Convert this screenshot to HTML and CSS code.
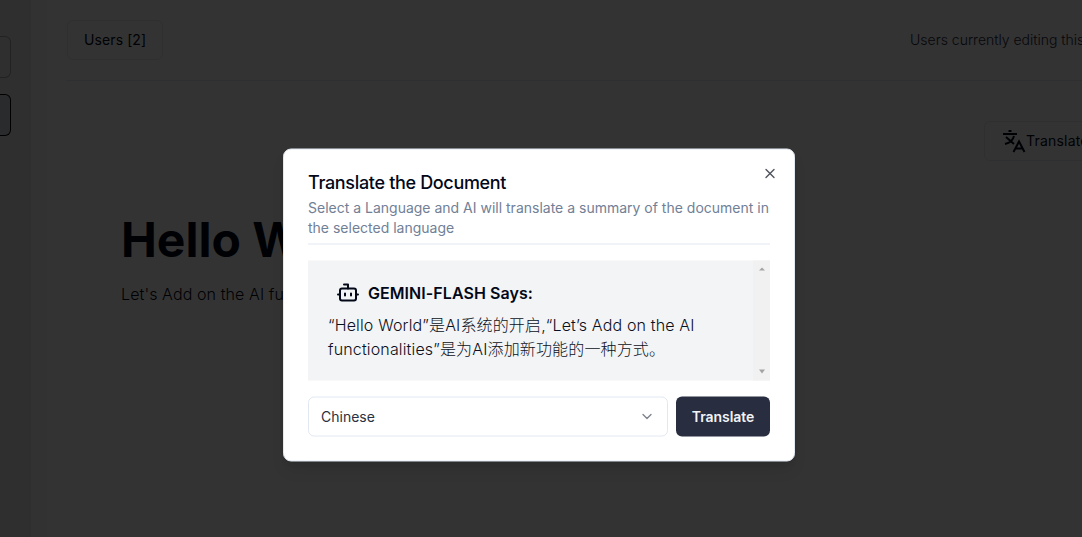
FILE: index.html
```html
<!DOCTYPE html>
<html lang="en">
<head>
<meta charset="utf-8">
<title>Translate the Document</title>
<link rel="stylesheet" href="styles.css">
</head>
<body>
<div class="app">
  <aside class="sidebar">
    <div class="doc-link"></div>
    <div class="doc-link active"></div>
  </aside>
  <div class="content">
    <main class="page">
      <div class="presence">
        <button class="btn users">Users [2]</button>
        <p class="editing">Users currently editing this page</p>
      </div>
      <div class="tools">
        <button class="btn translate">
          <svg width="24" height="24" viewBox="0 0 24 24" fill="none" stroke="currentColor" stroke-width="2"><path d="M1 5h14M6.500 2h3M4 8l8 7M12 7c-1 4-4 7-9 8M11.500 23 17 12.500 22.500 23M13.500 19.500h7"/></svg>
          <span>Translate</span>
        </button>
      </div>
      <article class="document">
        <h1>Hello World</h1>
        <p>Let's Add on the AI functionalities</p>
      </article>
    </main>
  </div>
</div>
<div class="overlay"></div>
<section class="dialog" role="dialog">
  <header class="dialog-head">
    <h2>Translate the Document</h2>
    <p>Select a Language and AI will translate a summary of the document in the selected language</p>
    <hr>
  </header>
  <div class="answer">
    <div class="answer-body">
      <div class="answer-title">
        <svg width="24" height="24" viewBox="0 0 24 24" fill="none" stroke="currentColor" stroke-width="2" stroke-linecap="round" stroke-linejoin="round"><path d="M12 8V4H8"/><rect width="16" height="12" x="4" y="8" rx="2"/><path d="M2 14h2M20 14h2M15 13v2M9 13v2"/></svg>
        <strong>GEMINI-FLASH Says:</strong>
      </div>
      <p>“Hello World”是AI系统的开启,“Let’s Add on the AI functionalities”是为AI添加新功能的一种方式。</p>
    </div>
    <div class="scrollbar"><i class="up"></i><i class="down"></i></div>
  </div>
  <form class="controls">
    <div class="select"><span>Chinese</span>
      <svg width="16" height="16" viewBox="0 0 24 24" fill="none" stroke="currentColor" stroke-width="2" stroke-linecap="round" stroke-linejoin="round"><path d="m6 9 6 6 6-6"/></svg>
    </div>
    <button class="submit" type="button">Translate</button>
  </form>
  <button class="close" aria-label="Close"><svg width="16" height="16" viewBox="0 0 24 24" fill="none" stroke="currentColor" stroke-width="2" stroke-linecap="round"><path d="M18 6 6 18M6 6l12 12"/></svg></button>
</section>
</body>
</html>
```
FILE: styles.css
```css
* { box-sizing: border-box; margin: 0; }
body { height: 537px; overflow: hidden; font-family: Inter, "Noto Sans CJK SC", sans-serif; font-size: 16px; line-height: 24px; color: #020817; background: #fff; }
button { font: inherit; color: inherit; }
svg { display: block; flex: none; }
.app { display: flex; height: 537px; width: 100%; overflow: hidden; }
.sidebar { width: 31px; background: #ebebeb; padding-top: 36px; display: flex; flex-direction: column; gap: 16px; flex: none; }
.doc-link { width: 11px; height: 42px; border: 1px solid #aaa; border-left: 0; border-radius: 0 6px 6px 0; }
.doc-link.active { border-color: #000; background: #d1d5db; }
.content { flex: 1; min-width: 0; background: #fafafa; padding-left: 16px; display: flex; }
.page { flex: 1; min-width: 0; background: #fff; padding: 20px 0 0 20px; }
.presence { height: 61px; display: flex; justify-content: space-between; align-items: flex-start; border-bottom: 1px solid #e2e8f0; }
.btn { height: 40px; border: 1px solid #e2e8f0; border-radius: 6px; background: #fff; padding: 0 16px; font-size: 14px; display: flex; align-items: center; }
.users { width: 96px; letter-spacing: .1px; white-space: nowrap; }
.editing { width: 172px; line-height: 40px; font-size: 14px; font-weight: 300; color: #1e293b; white-space: nowrap; overflow: hidden; }
.tools { padding: 40px 0 0 917px; overflow: hidden; }
.translate { width: 121px; padding-left: 17px; letter-spacing: .2px; }
.document { padding: 55px 0 0 54px; width: 700px; }
.document h1 { font-size: 48px; line-height: 48px; font-weight: 700; }
.document p { margin-top: 18px; font-weight: 300; letter-spacing: .1px; }
.overlay { position: absolute; inset: 0; background: rgba(0, 0, 0, .8); }
.dialog { position: absolute; left: 539px; top: 305px; transform: translate(-50%, -50%); width: 512px; height: 313px; padding: 24px; display: grid; grid-template-rows: 71px 120px 40px; gap: 16px; border: 1px solid #e2e8f0; border-radius: 8px; background: #fff; box-shadow: 0 10px 15px -3px rgba(0, 0, 0, .1), 0 4px 6px -4px rgba(0, 0, 0, .1); }
.dialog-head { display: flex; flex-direction: column; gap: 6px; }
.dialog-head h2 { font-size: 18px; line-height: 18px; font-weight: 500; letter-spacing: -.33px; }
.dialog-head p { font-size: 14px; line-height: 20px; color: #718096; }
.dialog-head hr { width: 100%; height: 1px; border: 0; background: #e2e8f0; }
.answer { display: flex; background: #f3f4f6; }
.answer-body { flex: 1; padding: 20px; }
.answer-title { display: flex; align-items: center; gap: 8px; padding-left: 8px; height: 24px; margin-bottom: 8px; }
.answer-title strong { font-weight: 600; letter-spacing: .06px; }
.answer-body p { font-weight: 300; letter-spacing: .15px; color: #0b1020; }
.scrollbar { width: 17px; background: #f1f1f1; display: flex; flex-direction: column; justify-content: space-between; align-items: center; padding: 7px 0; }
.scrollbar i { border: 3.5px solid transparent; }
.scrollbar .up { border-top: 0; border-bottom: 3px solid #a3a3a3; }
.scrollbar .down { border-bottom: 0; border-top: 4px solid #a3a3a3; }
.controls { display: flex; gap: 8px; }
.select { flex: 1; display: flex; align-items: center; justify-content: space-between; padding: 0 12px; border: 1px solid #e2e8f0; border-radius: 6px; font-size: 14px; color: #2b3040; }
.select svg { opacity: .6; }
.submit { width: 94px; border: 0; border-radius: 6px; background: #282d3f; color: #f1f3f7; font-size: 14px; font-weight: 600; letter-spacing: -.05px; padding: 0; }
.close { position: absolute; top: 16px; right: 16px; padding: 0; border: 0; background: none; opacity: .7; }
```
